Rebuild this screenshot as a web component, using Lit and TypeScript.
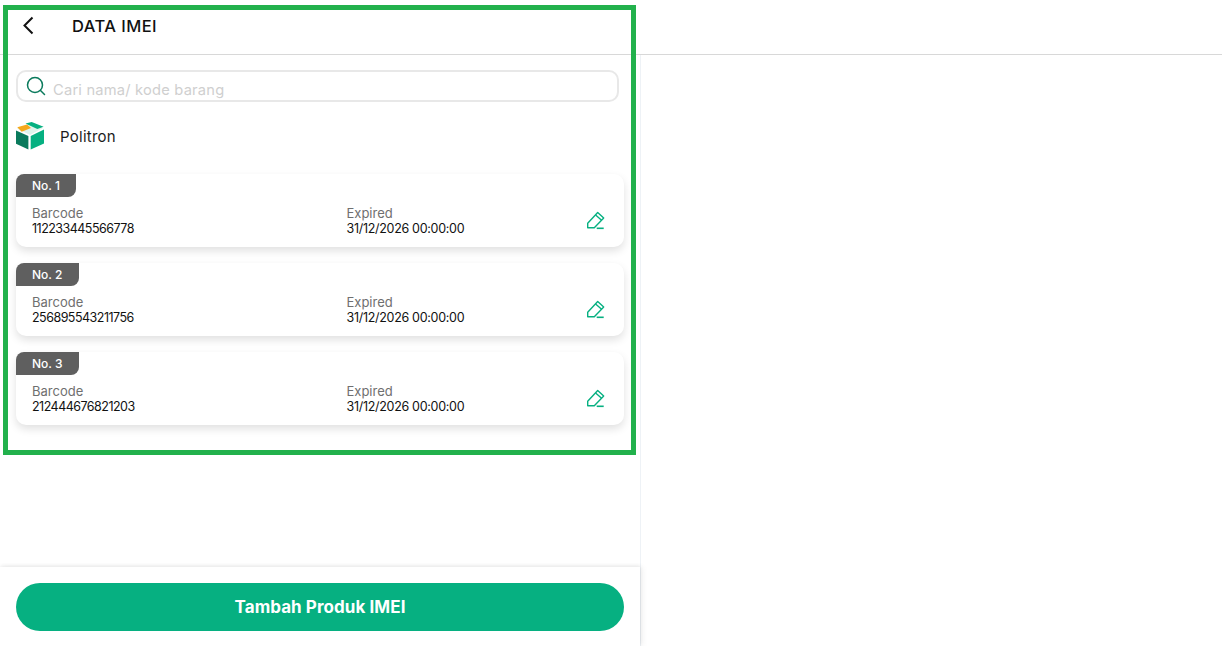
import { css, html, LitElement } from "lit";
import { customElement } from "lit/decorators.js";

const items = [
  { no: 1, barcode: "112233445566778", expired: "31/12/2026 00:00:00", tag: 60 },
  { no: 2, barcode: "256895543211756", expired: "31/12/2026 00:00:00", tag: 63 },
  { no: 3, barcode: "212444676821203", expired: "31/12/2026 00:00:00", tag: 63 },
];

@customElement("app-root")
export class AppRoot extends LitElement {
  static styles = css`
    :host {
      display: block;
      position: relative;
      width: 1222px;
      height: 646px;
      overflow: hidden;
      background: #fff;
      font-family: "Inter", "Open Sans", sans-serif;
      color: #1c1c1c;
    }

    .topbar {
      box-sizing: border-box;
      height: 55px;
      border-bottom: 1px solid #d8d8d8;
      display: flex;
      align-items: flex-start;
      padding: 15px 0 0 22px;
      gap: 38px;
    }

    .back {
      display: block;
      flex: none;
    }

    .title {
      font-size: 16.5px;
      line-height: 22px;
      font-weight: 500;
      letter-spacing: 0.45px;
      color: #111;
    }

    .panel {
      box-sizing: border-box;
      width: 641px;
      height: 591px;
      border-right: 1px solid #eef2f6;
      display: flex;
      flex-direction: column;
    }

    .body {
      flex: 1;
      padding: 15px 16px 0;
    }

    .search {
      box-sizing: border-box;
      width: 603px;
      height: 32px;
      border: 2px solid #e8e8e8;
      border-radius: 10px;
      display: flex;
      align-items: center;
      padding-left: 8px;
      gap: 7px;
    }

    .search span {
      font-size: 14.7px;
      line-height: 18px;
      padding-top: 7px;
      color: #cfcfcf;
      letter-spacing: 0.2px;
    }

    .product {
      display: flex;
      align-items: center;
      gap: 16px;
      margin-top: 20px;
      height: 28px;
      font-size: 15px;
      font-weight: 400;
      letter-spacing: 0.25px;
    }

    .cards {
      display: flex;
      flex-direction: column;
      gap: 16px;
      margin-top: 24px;
    }

    .card {
      box-sizing: border-box;
      width: 608px;
      height: 73px;
      border-radius: 10px;
      background: #fff;
      box-shadow: 0 4px 9px rgba(0, 0, 0, 0.12);
      position: relative;
      display: flex;
      flex-direction: column;
    }

    .tag {
      box-sizing: border-box;
      height: 23px;
      background: #5f5f5f;
      color: #fff;
      font-size: 12px;
      line-height: 23px;
      font-weight: 500;
      padding-left: 16px;
      border-radius: 8px 0 8px 0;
    }

    .row {
      display: grid;
      grid-template-columns: 314.5px 1fr 22px;
      padding: 9px 16px 0;
      align-items: center;
    }

    .label {
      font-size: 13px;
      line-height: 15px;
      color: #6f6f6f;
    }

    .value {
      font-size: 12.5px;
      line-height: 15px;
      color: #111;
      letter-spacing: -0.3px;
    }

    .value.code {
      letter-spacing: -0.52px;
    }

    .footer {
      box-sizing: border-box;
      height: 79px;
      padding: 16px 16px 0;
      box-shadow: 0 -1px 4px rgba(0, 0, 0, 0.08), 3px 0 6px rgba(0, 0, 0, 0.05);
      background: #fff;
    }

    .cta {
      height: 48px;
      width: 608px;
      border-radius: 24px;
      background: #06b081;
      color: #fff;
      display: flex;
      align-items: center;
      justify-content: center;
      font-size: 17px;
      font-weight: 700;
      letter-spacing: 0.07px;
    }

    .frame {
      position: absolute;
      left: 3px;
      top: 5px;
      width: 633px;
      height: 450px;
      box-sizing: border-box;
      border: 5px solid #22b14c;
      pointer-events: none;
    }
  `;

  renderBox() {
    return html`<svg width="28" height="28" viewBox="0 0 28 28">
      <path d="M1 6.5 15 1 27 6 14 13Z" fill="#dff4ec" />
      <path d="M1.3 5.3 11 2.6 15 6 5.7 9.7Z" fill="#f5a81c" />
      <path d="M9.5 1.5 15.7 0 27.6 4.7 21.3 7Z" fill="#06b081" />
      <path d="M0 8.4 12.4 14V27.6L0 21.8Z" fill="#0a7a5c" />
      <path d="M14.7 14 28 7.6V21.6L14.7 27.6Z" fill="#06b081" />
    </svg>`;
  }

  renderEdit() {
    return html`<svg width="20" height="20" viewBox="0 0 20 20" fill="none" stroke="#06b081" stroke-width="1.4">
      <path d="M1.7 16.7V12.3L11.7 1.5 17.7 6.9 8.3 16.7Z" stroke-linejoin="round" />
      <path d="M9.6 4 15.6 9.2" />
      <path d="M10.7 17.3H17.7" stroke-width="1.6" />
    </svg>`;
  }

  render() {
    return html`
      <div class="topbar">
        <svg class="back" width="12" height="20" viewBox="0 0 12 20" fill="none" stroke="#111" stroke-width="2">
          <path d="M10.5 2.5 2.5 10.5 10.5 18.5" />
        </svg>
        <div class="title">DATA IMEI</div>
      </div>
      <div class="panel">
        <div class="body">
          <div class="search">
            <svg width="20" height="20" viewBox="0 0 20 20" fill="none" stroke="#0a7a5c" stroke-width="1.5">
              <circle cx="9" cy="9" r="7.5" />
              <path d="M14.5 14.5 18.5 18.5" stroke-linecap="round" />
            </svg>
            <span>Cari nama/ kode barang</span>
          </div>
          <div class="product">${this.renderBox()}<span>Politron</span></div>
          <div class="cards">
            ${items.map(
              (item) => html`
                <div class="card">
                  <div class="tag" style="width:${item.tag}px">No. ${item.no}</div>
                  <div class="row">
                    <div>
                      <div class="label">Barcode</div>
                      <div class="value code">${item.barcode}</div>
                    </div>
                    <div>
                      <div class="label">Expired</div>
                      <div class="value">${item.expired}</div>
                    </div>
                    ${this.renderEdit()}
                  </div>
                </div>
              `
            )}
          </div>
        </div>
        <div class="footer"><div class="cta">Tambah Produk IMEI</div></div>
      </div>
      <div class="frame"></div>
    `;
  }
}
